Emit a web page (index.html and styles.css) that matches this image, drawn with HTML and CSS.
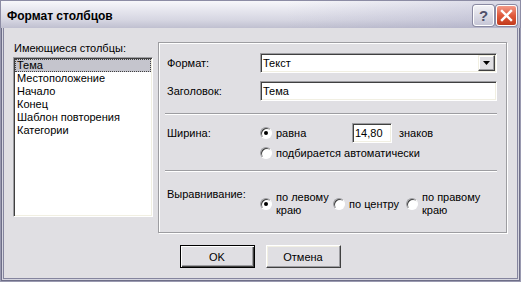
FILE: index.html
```html
<!DOCTYPE html>
<html lang="ru">
<head>
    <meta charset="UTF-8">
    <title>Формат столбцов</title>
    <link rel="stylesheet" href="styles.css">
</head>
<body>
    <div class="window">
        <div class="titlebar">
            <span class="title">Формат столбцов</span>
            <span class="caption-buttons">
                <span class="cap-btn help">?</span>
                <span class="cap-btn close">
                    <svg width="13" height="13" viewBox="0 0 13 13">
                        <path d="M2 2 L11 11 M11 2 L2 11" stroke="#fff" stroke-width="2.4" stroke-linecap="square"/>
                    </svg>
                </span>
            </span>
        </div>

        <div class="client">
            <div class="main">
                <div class="columns">
                    <div class="caption">Имеющиеся столбцы:</div>
                    <ul class="listbox">
                        <li class="selected">Тема</li>
                        <li>Местоположение</li>
                        <li>Начало</li>
                        <li>Конец</li>
                        <li>Шаблон повторения</li>
                        <li>Категории</li>
                    </ul>
                </div>

                <div class="group">
                    <div class="field">
                        <span class="field-label">Формат:</span>
                        <div class="combo">
                            <span class="combo-text">Текст</span>
                            <span class="combo-btn">
                                <svg width="7" height="4" viewBox="0 0 7 4"><path d="M0 0 H7 L3.5 4 Z" fill="#000"/></svg>
                            </span>
                        </div>
                    </div>
                    <div class="field field-next">
                        <span class="field-label">Заголовок:</span>
                        <div class="textbox">Тема</div>
                    </div>

                    <div class="separator sep-top"></div>

                    <div class="field field-width">
                        <span class="field-label">Ширина:</span>
                        <div class="options">
                            <div class="option-row">
                                <span class="radio-opt opt-equal"><span class="radio checked"></span>равна</span>
                                <div class="textbox small">14,80</div>
                                <span class="unit">знаков</span>
                            </div>
                            <div class="option-row auto">
                                <span class="radio-opt"><span class="radio"></span>подбирается автоматически</span>
                            </div>
                        </div>
                    </div>

                    <div class="separator sep-bottom"></div>

                    <div class="field field-align">
                        <span class="field-label">Выравнивание:</span>
                        <div class="align-options">
                            <span class="radio-opt opt-align"><span class="radio checked"></span><span>по левому<br>краю</span></span>
                            <span class="radio-opt opt-align"><span class="radio"></span><span>по центру</span></span>
                            <span class="radio-opt"><span class="radio"></span><span>по правому<br>краю</span></span>
                        </div>
                    </div>
                </div>
            </div>

            <div class="buttons">
                <button class="btn default" type="button">OK</button>
                <button class="btn" type="button">Отмена</button>
            </div>
        </div>
    </div>
</body>
</html>
```

FILE: styles.css
```css
body {
    margin: 0;
    background: #fff;
    color: #000;
    font-family: "Liberation Sans", Arial, sans-serif;
    font-size: 11px;
}
.window {
    width: 521px;
    height: 282px;
    box-sizing: border-box;
    display: flex;
    flex-direction: column;
    border: 1px solid #9a9ab0;
    border-top: 0;
    padding: 0 3px 3px;
    background: #e0dfe3;
    box-shadow: inset 0 0 0 1px #6e6e88, inset 0 0 0 2px #d6d6e0, inset 0 0 0 3px #85859e;
}
.titlebar {
    height: 28px;
    margin: 0 -4px;
    box-sizing: border-box;
    display: flex;
    align-items: center;
    justify-content: space-between;
    padding: 2px 3px 0 6px;
    border: 1px solid #8c8ca4;
    border-bottom: 0;
    background:
        linear-gradient(90deg, rgba(255, 255, 255, 0) 55%, rgba(150, 150, 185, 0.3) 100%),
        linear-gradient(#f7f7fa 0%, #e6e6ee 35%, #d6d6e2 70%, #c0c0d0 100%);
}
.title {
    font-weight: bold;
    font-size: 12px;
}
.caption-buttons {
    display: flex;
    gap: 2px;
}
.cap-btn {
    width: 21px;
    height: 21px;
    box-sizing: border-box;
    display: flex;
    align-items: center;
    justify-content: center;
    border: 1px solid #fff;
    border-radius: 3px;
    box-shadow: 0 0 0 1px #8a8aa2;
}
.help {
    background: linear-gradient(#f2f2f6, #c6c6d6);
    color: #50506a;
    font-weight: bold;
    font-size: 15px;
}
.close {
    background: linear-gradient(#f29a88, #e05a3c 50%, #c23a1c);
}
.client {
    flex: 1;
    padding: 14px 10px 0 9px;
    background: #e0dfe3;
}
.main {
    display: flex;
    align-items: flex-start;
    gap: 5px;
}
.columns {
    width: 140px;
    flex: none;
}
.caption {
    line-height: 13px;
    margin-bottom: 2px;
    padding-left: 1px;
}
.listbox {
    height: 160px;
    box-sizing: border-box;
    margin: 0;
    padding: 1px;
    list-style: none;
    background: #fff;
    border: 1px solid;
    border-color: #9d9da1 #fff #fff #9d9da1;
    box-shadow: inset 1px 1px #404040, inset -1px -1px #f1efe2;
}
.listbox li {
    line-height: 13px;
    padding-left: 2px;
}
.listbox li.selected {
    background: #c5c5cd;
    outline: 1px dotted #404040;
    outline-offset: -1px;
}
.group {
    flex: 1;
    box-sizing: border-box;
    border: 1px solid #9d9da1;
    box-shadow: inset 1px 1px #fff, 1px 1px #fff;
    padding: 10px 9px 15px 6px;
}
.field {
    display: flex;
    align-items: center;
    height: 20px;
}
.field-next {
    margin-top: 8px;
}
.field-label {
    width: 95px;
    flex: none;
    box-sizing: border-box;
    padding-left: 2px;
}
.combo, .textbox {
    height: 20px;
    box-sizing: border-box;
    background: #fff;
    border: 1px solid;
    border-color: #9d9da1 #fff #fff #9d9da1;
    box-shadow: inset 1px 1px #404040, inset -1px -1px #f1efe2;
}
.combo {
    flex: 1;
    display: flex;
    padding: 1px;
}
.combo-text {
    flex: 1;
    padding-left: 1px;
    line-height: 16px;
}
.combo-btn {
    width: 17px;
    height: 16px;
    box-sizing: border-box;
    display: flex;
    align-items: center;
    justify-content: center;
    background: #e0dfe3;
    border: 1px solid;
    border-color: #f1efe2 #404040 #404040 #f1efe2;
    box-shadow: inset -1px -1px #9d9da1, inset 1px 1px #fff;
}
.textbox {
    flex: 1;
    padding: 0 2px;
    line-height: 18px;
}
.textbox.small {
    flex: none;
    width: 40px;
}
.separator {
    height: 1px;
    background: #9d9da1;
    border-bottom: 1px solid #fff;
}
.sep-top {
    margin: 12px 0 8px;
}
.sep-bottom {
    margin: 10px 0 19px;
}
.field-width {
    height: auto;
    align-items: flex-start;
}
.field-width .field-label {
    line-height: 20px;
}
.options {
    display: flex;
    flex-direction: column;
    gap: 2px;
}
.option-row {
    display: flex;
    align-items: center;
    height: 20px;
}
.option-row.auto {
    height: 15px;
}
.radio-opt {
    display: flex;
    align-items: center;
    gap: 4px;
}
.opt-equal {
    width: 92px;
}
.unit {
    margin-left: 7px;
}
.radio {
    width: 12px;
    height: 12px;
    flex: none;
    box-sizing: border-box;
    border-radius: 50%;
    background: #fff;
    border: 1px solid;
    border-color: #9d9da1 #fff #fff #9d9da1;
    box-shadow: inset 1px 1px #404040;
}
.radio.checked::after {
    content: "";
    display: block;
    width: 4px;
    height: 4px;
    margin: 3px;
    border-radius: 50%;
    background: #000;
}
.field-align {
    height: 26px;
    align-items: flex-start;
}
.field-align .field-label {
    line-height: 13px;
    margin-top: -3px;
}
.align-options {
    display: flex;
    align-items: center;
    height: 26px;
    line-height: 13px;
}
.opt-align {
    width: 73px;
}
.buttons {
    display: flex;
    justify-content: center;
    gap: 11px;
    margin-top: 12px;
}
.btn {
    width: 75px;
    height: 23px;
    padding: 0;
    font: inherit;
    color: #000;
    background: #e0dfe3;
    border: 1px solid;
    border-color: #fff #404040 #404040 #fff;
    box-shadow: inset -1px -1px #9d9da1, inset 1px 1px #f1efe2;
}
.btn.default {
    border-color: #000;
    box-shadow: inset 1px 1px #fff, inset -1px -1px #404040, inset -2px -2px #9d9da1;
}
```
